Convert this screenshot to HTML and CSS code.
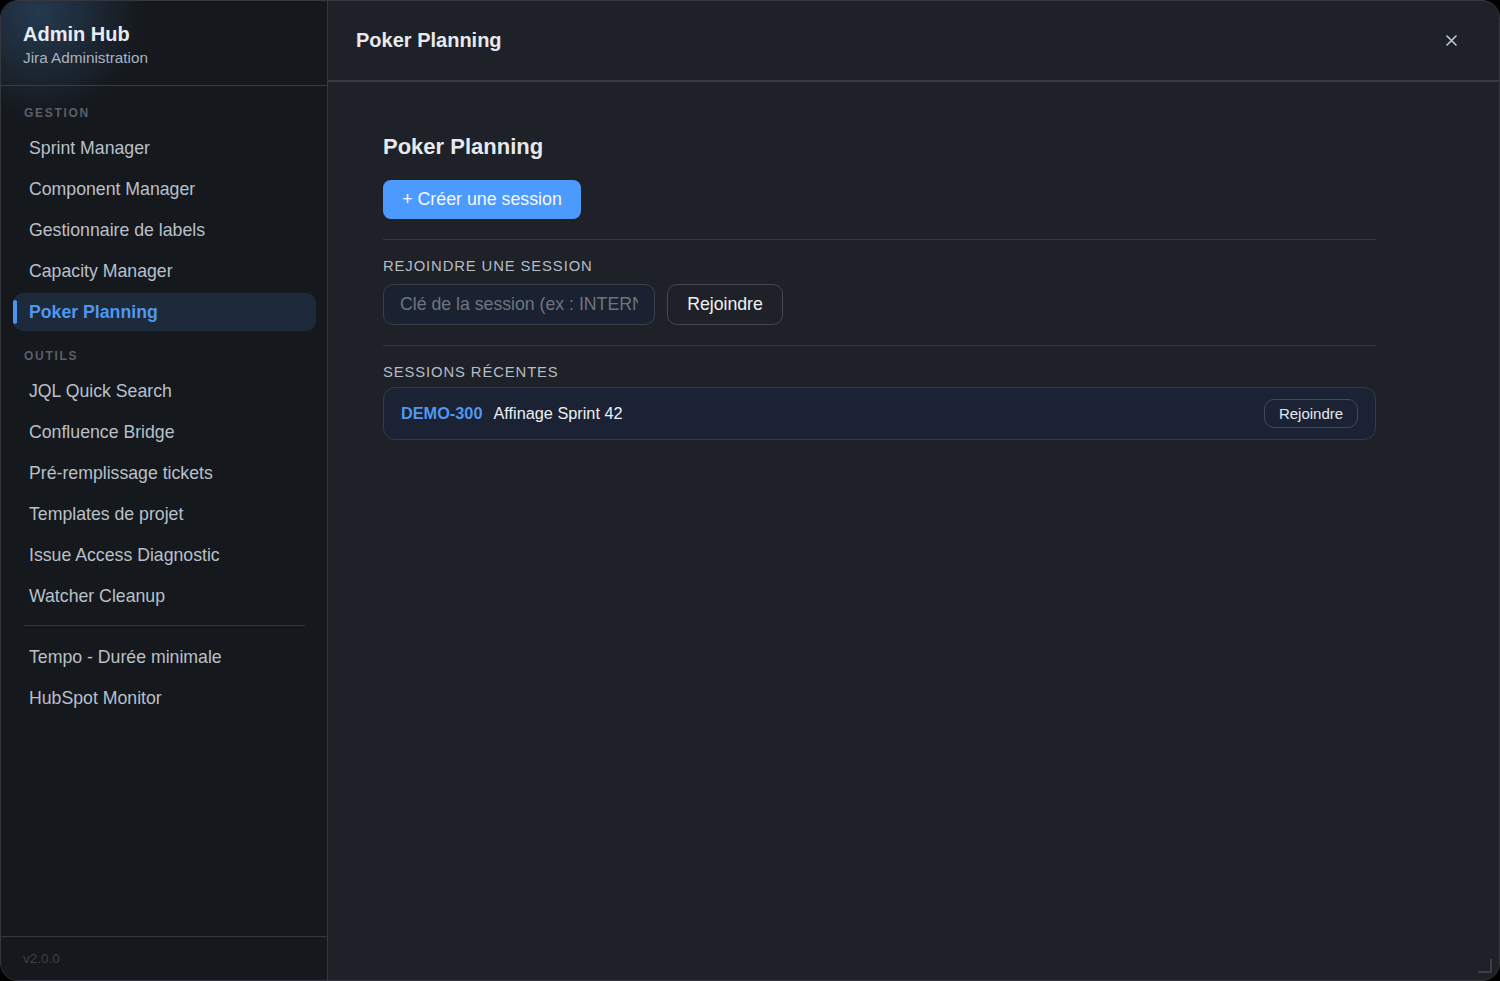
FILE: index.html
```html
<!DOCTYPE html>
<html lang="fr">
<head>
    <meta charset="UTF-8">
    <meta name="viewport" content="width=device-width, initial-scale=1.0">
    <title>Admin Hub - Poker Planning</title>
    <link rel="stylesheet" href="styles.css">
</head>
<body>
    <div class="window">
        <aside class="sidebar">
            <div class="brand">
                <h1>Admin Hub</h1>
                <p>Jira Administration</p>
            </div>
            <nav class="nav">
                <div class="nav-label">Gestion</div>
                <a class="nav-item">Sprint Manager</a>
                <a class="nav-item">Component Manager</a>
                <a class="nav-item">Gestionnaire de labels</a>
                <a class="nav-item">Capacity Manager</a>
                <a class="nav-item active">Poker Planning</a>
                <div class="nav-label">Outils</div>
                <a class="nav-item">JQL Quick Search</a>
                <a class="nav-item">Confluence Bridge</a>
                <a class="nav-item">Pré-remplissage tickets</a>
                <a class="nav-item">Templates de projet</a>
                <a class="nav-item">Issue Access Diagnostic</a>
                <a class="nav-item">Watcher Cleanup</a>
                <div class="nav-sep"></div>
                <a class="nav-item">Tempo - Durée minimale</a>
                <a class="nav-item">HubSpot Monitor</a>
            </nav>
            <div class="version">v2.0.0</div>
        </aside>
        <main class="main">
            <header class="main-header">
                <h2>Poker Planning</h2>
                <button class="close" aria-label="Fermer">
                    <svg width="11" height="11" viewBox="0 0 11 11"><path d="M1 1l9 9M10 1l-9 9" stroke="currentColor" stroke-width="1.6" stroke-linecap="round"/></svg>
                </button>
            </header>
            <section class="content">
                <h3>Poker Planning</h3>
                <button class="btn-primary">+ Créer une session</button>
                <hr class="divider">
                <div class="section-label">Rejoindre une session</div>
                <div class="join-row">
                    <input type="text" class="key-input" placeholder="Clé de la session (ex : INTERNE-123)">
                    <button class="btn-outline">Rejoindre</button>
                </div>
                <hr class="divider">
                <div class="section-label recent">Sessions récentes</div>
                <ul class="sessions">
                    <li class="session">
                        <span class="session-key">DEMO-300</span>
                        <span class="session-name">Affinage Sprint 42</span>
                        <button class="btn-small">Rejoindre</button>
                    </li>
                </ul>
            </section>
            <div class="grip"></div>
        </main>
    </div>
</body>
</html>
```

FILE: styles.css
```css
body {
    margin: 0;
    padding: 0;
    background: #000;
    font-family: "Liberation Sans", Arial, sans-serif;
    height: 100vh;
    overflow: hidden;
}

.window {
    display: flex;
    height: 979px;
    border: 1px solid #34373e;
    border-radius: 18px;
    overflow: hidden;
    background: #1e2127;
}

.sidebar {
    width: 326px;
    flex-shrink: 0;
    display: flex;
    flex-direction: column;
    background: radial-gradient(circle at 38px 12px, rgba(52, 90, 130, 0.5), rgba(52, 90, 130, 0) 105px), #15181c;
    border-right: 1px solid #33363d;
}

.brand {
    height: 85px;
    padding: 0 22px;
    box-sizing: border-box;
    display: flex;
    flex-direction: column;
    justify-content: center;
    border-bottom: 1px solid #3a3d44;
}

.brand h1 {
    margin: 3px 0 0;
    font-size: 20px;
    color: #e6ecf4;
}

.brand p {
    margin: 3px 0 0;
    font-size: 15.3px;
    color: #aab2bd;
}

.nav {
    flex: 1;
    padding: 20px 11px 0 12px;
    display: flex;
    flex-direction: column;
}

.nav-label {
    padding-left: 11px;
    font-size: 12px;
    font-weight: bold;
    letter-spacing: 1.7px;
    text-transform: uppercase;
    color: #5a606a;
    height: 16px;
    margin-bottom: 7px;
}

.nav-item {
    display: block;
    height: 38px;
    line-height: 38px;
    padding-left: 16px;
    margin-bottom: 3px;
    font-size: 17.7px;
    color: #b9c0ca;
    border-radius: 10px;
    position: relative;
}

.nav-item.active {
    background: #1c2a3c;
    color: #4f97f0;
    font-weight: bold;
}

.nav-item.active::before {
    content: "";
    position: absolute;
    left: 0;
    top: 7px;
    bottom: 7px;
    width: 4px;
    border-radius: 2px;
    background: #4a93f0;
}

.nav-item.active + .nav-label {
    margin-top: 15px;
}

.nav-sep {
    height: 1px;
    background: #33363d;
    margin: 7px 11px 12px 11px;
}

.version {
    height: 43px;
    border-top: 1px solid #33363d;
    padding: 0 22px;
    display: flex;
    align-items: center;
    font-size: 13.5px;
    color: #3c4149;
}

.main {
    flex: 1;
    display: flex;
    flex-direction: column;
    position: relative;
}

.main-header {
    height: 79px;
    border-bottom: 2px solid #363a42;
    display: flex;
    align-items: center;
    justify-content: space-between;
    padding: 0 42px 0 28px;
}

.main-header h2 {
    margin: 0;
    font-size: 20px;
    color: #e6e9ee;
}

.close {
    background: none;
    border: none;
    padding: 0;
    color: #c4cad3;
    display: flex;
    cursor: pointer;
}

.content {
    width: 993px;
    padding: 52px 0 0 55px;
}

.content h3 {
    margin: 0 0 20px;
    font-size: 22px;
    color: #e6e9ee;
}

.btn-primary {
    height: 39px;
    width: 198px;
    border: none;
    border-radius: 8px;
    background: #4d9aff;
    color: #f4f8ff;
    font-family: inherit;
    font-size: 17.8px;
    cursor: pointer;
}

.divider {
    border: none;
    height: 1px;
    background: #343840;
    margin: 20px 0 18px;
}

.section-label {
    font-size: 14.8px;
    letter-spacing: 0.9px;
    text-transform: uppercase;
    color: #b6bcc6;
    margin-bottom: 10px;
}

.section-label.recent {
    margin-bottom: 7px;
}

.join-row {
    display: flex;
    gap: 12px;
}

.key-input {
    width: 272px;
    height: 41px;
    box-sizing: border-box;
    padding: 0 16px;
    border: 1px solid #3a3f48;
    border-radius: 10px;
    background: #1a2130;
    color: #e6e9ee;
    font-family: inherit;
    font-size: 17.7px;
}

.key-input::placeholder {
    color: #6e7580;
}

.btn-outline {
    height: 41px;
    width: 116px;
    border: 1px solid #444951;
    border-radius: 10px;
    background: transparent;
    color: #f0f2f5;
    font-family: inherit;
    font-size: 17.7px;
    cursor: pointer;
}

.sessions {
    list-style: none;
    margin: 0;
    padding: 0;
}

.session {
    display: flex;
    align-items: center;
    height: 53px;
    box-sizing: border-box;
    padding: 0 17px;
    border: 1px solid #343a46;
    border-radius: 12px;
    background: #1a2233;
    font-size: 16.3px;
}

.session-key {
    color: #4f97f0;
    font-weight: bold;
    margin-right: 11px;
}

.session-name {
    color: #eceff3;
    flex: 1;
}

.btn-small {
    height: 29px;
    width: 94px;
    border: 1px solid #434956;
    border-radius: 10px;
    background: transparent;
    color: #e4e8ee;
    font-family: inherit;
    font-size: 15px;
    cursor: pointer;
}

.grip {
    position: absolute;
    right: 7px;
    bottom: 7px;
    width: 12px;
    height: 12px;
    border-right: 2px solid #3a3e46;
    border-bottom: 2px solid #3a3e46;
}
```
